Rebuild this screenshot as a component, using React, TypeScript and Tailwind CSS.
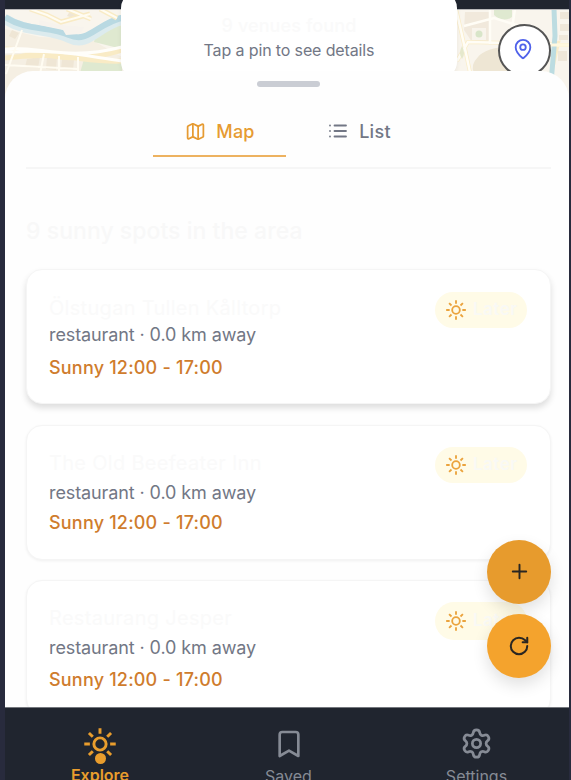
import React from "react";
import { Bookmark, Map as MapIcon, MapPin, Plus, RotateCw, Settings } from "lucide-react";

function SunIcon({ size, stroke = 2 }: { size: number; stroke?: number }) {
  return (
    <svg width={size} height={size} viewBox="0 0 24 24" fill="none" stroke="currentColor" strokeWidth={stroke} className="shrink-0">
      <circle cx="12" cy="12" r="4.6" />
      <path d="M12 0.2v4.2M12 19.6v4.2M0.2 12h4.2M19.6 12h4.2M3.7 3.7l2.9 2.9M17.4 17.4l2.9 2.9M3.7 20.3l2.9-2.9M17.4 6.6l2.9-2.9" />
    </svg>
  );
}

function ListIcon() {
  return (
    <svg width="18" height="16" viewBox="0 0 18 16" fill="none" stroke="currentColor" strokeWidth="1.8" strokeLinecap="round" className="shrink-0">
      <path d="M5.5 2.5H17M5.5 8H17M5.5 13.5H17M1 2.5h.01M1 8h.01M1 13.5h.01" />
    </svg>
  );
}

function StreetMap() {
  return (
    <svg viewBox="5 10 564 90" preserveAspectRatio="none" className="block h-[90px] w-full">
      <rect x="5" y="10" width="564" height="90" fill="#f9f5ed" />
      <path d="M5 30L40 38L90 40L122 58V100H5z" fill="#f5efe3" />
      <path d="M96 32L122 26V50L94 43z" fill="#dfe9d0" />
      <path d="M84 60L122 63V74H80z" fill="#dfe9d0" />
      <g fill="#efe6d5">
        <path d="M27 60L40 58L38 69L25 68zM47 57L57 58L56 71L46 70zM62 60L74 61L73 71L61 70zM70 12L78 14L75 20L67 17zM12 31L19 34L15 40L9 37z" />
      </g>
      <path d="M5 20C26 34 49 29 69 39S96 27 125 20" fill="none" stroke="#dcebee" strokeWidth="10" />
      <path d="M5 18C26 32 49 27 69 36S96 24 125 18" fill="none" stroke="#b9d9e2" strokeWidth="6" />
      <path d="M39 21L60 26L84 28L80 35L66 36L63 31L39 26z" fill="#f7f3ed" />
      <g fill="none" stroke="#f9ebc5" strokeWidth="5">
        <path d="M5 50C38 50 64 69 122 51M5 59C60 51 84 64 122 62M30 10L47 16L61 23L90 15M67 10L91 20M100 10L117 19" />
      </g>
      <g fill="none" stroke="#fffefa" strokeWidth="3">
        <path d="M5 50C38 46 64 63 122 48M5 53C60 50 84 57 122 62" />
      </g>
      <g fill="none" stroke="#fffcf2" strokeWidth="2">
        <path d="M30 10L47 16L61 23L90 15M67 10L91 20M100 10L117 19M44 55L39 80M78 58V80M22 31L6 75M5 66L78 70M59 57V80" />
      </g>
      <path d="M494 10H512V18Q503 24 494 16z" fill="#dfe9d0" />
      <path d="M465 13H490V43H472L464 31z" fill="#f1e9dc" />
      <rect x="472" y="29" width="14" height="12" fill="#f8f4ec" />
      <circle cx="479" cy="35" r="3.5" fill="#d8e5c9" />
      <path d="M478 58Q485 49 510 47V74H474Q470 66 478 58z" fill="#eee6d4" />
      <g fill="none" stroke="#faedca" strokeWidth="4">
        <path d="M456 10L464 45L471 78M457 62L468 43L552 45M551 46L558 44L551 75M552 46H569" />
      </g>
      <g fill="none" stroke="#fffdf6" strokeWidth="2.5">
        <path d="M456 10L464 45L471 78M457 62L468 43L552 45M552 46H569M490 10V45M464 27L494 19L532 31M515 10L510 42" />
      </g>
      <path d="M462 47Q466 54 462 60Q458 54 462 47z" fill="#e5e8cc" />
      <path d="M554 10L555 37L551 84" fill="none" stroke="#bcdce1" strokeWidth="5" />
      <path d="M551 46H569" stroke="#fff8df" strokeWidth="3" />
      <g fill="#efe7d9">
        <path d="M560 13H569V20H560zM560 25H569V32H560zM559 36H568V41H559zM558 52H567V62H558z" />
      </g>
      <rect x="5" y="10" width="564" height="1" fill="#b8b9ba" />
    </svg>
  );
}

interface Venue {
  name: string;
  card: string;
  title: string;
  hours: string;
  badge: string;
}

const venues: Venue[] = [
  {
    name: "Ölstugan Tullen Kålltorp",
    card: "mt-[23px] h-[135px] pt-[22px] shadow-[0_4px_6px_rgba(0,0,0,0.13)]",
    title: "h-[30px] leading-[33px]",
    hours: "mt-[7px]",
    badge: "h-9",
  },
  {
    name: "The Old Beefeater Inn",
    card: "mt-[21px] h-[135px] pt-[21px] shadow-[0_1px_3px_rgba(0,0,0,0.06)]",
    title: "h-[33px] leading-[33px]",
    hours: "mt-[4px]",
    badge: "h-9",
  },
  {
    name: "Restaurang Jesper",
    card: "mt-5 h-[135px] pt-[21px] shadow-[0_1px_3px_rgba(0,0,0,0.06)]",
    title: "h-[33px] leading-[33px]",
    hours: "mt-[6px]",
    badge: "h-[38px]",
  },
];

function VenueCard({ venue }: { venue: Venue }) {
  return (
    <article className={`flex shrink-0 justify-between rounded-[16px] border-[1.5px] border-[#f5f5f5] bg-white pr-[23px] pl-[22px] ${venue.card}`}>
      <div>
        <h3 className={`text-[20px] tracking-[0.3px] text-[#fafafa] ${venue.title}`}>{venue.name}</h3>
        <p className="h-[26px] text-[18px] leading-[26px] tracking-[-0.1px] text-[#727785]">restaurant · 0.0 km away</p>
        <p className={`h-[26px] text-[18px] leading-[26px] font-medium tracking-[0.2px] text-[#cf7c2d] ${venue.hours}`}>Sunny 12:00 - 17:00</p>
      </div>
      <div className={`flex w-[92px] items-center gap-[7px] rounded-full bg-[#fffbe7] pl-[11px] text-[#eba33d] ${venue.badge}`}>
        <SunIcon size={20} stroke={2.2} />
        <span className="text-[17px] font-semibold tracking-[0.5px] text-[#f9f9f5]">Later</span>
      </div>
    </article>
  );
}

export default function App() {
  return (
    <div className="relative h-[780px] w-[571px] overflow-hidden bg-[#282b3d] pr-[2px] pl-[5px] font-['Inter','Liberation_Sans',sans-serif]">
      <div className="flex h-full flex-col bg-[#20252f]">
        <header className="relative h-[71px] shrink-0 pt-[9px]">
          <StreetMap />
          <div className="absolute -top-2 left-[116px] h-[86px] w-[336px] rounded-[16px] bg-white pt-[20px] text-center shadow-[0_2px_5px_rgba(0,0,0,0.06)]">
            <p className="text-[18px] leading-[27px] font-medium tracking-[0.1px] text-[#fafafa]">9 venues found</p>
            <p className="text-[16px] leading-[22px] tracking-[-0.13px] text-[#727785]">Tap a pin to see details</p>
          </div>
          <button className="absolute top-6 left-[493px] flex size-[53px] items-center justify-center rounded-full border-2 border-[#555] bg-white pr-[3px] pb-[3px] text-[#4f61ea]">
            <MapPin size={22} strokeWidth={2} />
          </button>
        </header>

        <main className="relative flex h-[636px] shrink-0 flex-col overflow-hidden rounded-t-[28px] bg-[#fefefe] pr-[18px] pl-[21px]">
          <div className="mt-[10px] h-[6px] w-[63px] shrink-0 self-center rounded-full bg-[#cacdd4]" />
          <nav className="flex h-[82px] shrink-0 justify-center border-b-2 border-[#f6f6f6] pt-[18px] pl-[7px] text-[18px] font-medium">
            <div className="flex h-[52px] w-[133px] items-center justify-center gap-[10px] border-b-2 border-[#edb260] pt-[2px] pl-[2px] text-[#e69b32]">
              <MapIcon size={21} strokeWidth={2} />
              <span className="tracking-[0.2px]">Map</span>
            </div>
            <div className="flex h-[50px] w-[146px] items-center justify-center gap-[12px] pt-[2px] pl-[3px] text-[#727785]">
              <ListIcon />
              <span className="tracking-[0.3px]">List</span>
            </div>
          </nav>
          <h2 className="mt-[48px] h-[29px] shrink-0 text-[23px] leading-[28px] font-medium tracking-[0.04px] text-[#f8f8f8]">9 sunny spots in the area</h2>
          {venues.map((venue) => (
            <VenueCard key={venue.name} venue={venue} />
          ))}
        </main>

        <footer className="relative flex flex-1 overflow-hidden border-t border-[#74777d] bg-[#20252f] text-[#868b95]">
          <div className="flex w-[190px] shrink-0 flex-col items-center pt-5 text-[#e99d2d]">
            <SunIcon size={32} stroke={2.2} />
            <div className="-mt-[7px] size-[11px] shrink-0 rounded-full bg-[#e99d2d]" />
            <span className="mt-px text-[16px] leading-[20px] font-semibold">Explore</span>
          </div>
          <div className="flex w-[187px] shrink-0 flex-col items-center pt-[20px]">
            <Bookmark size={32} strokeWidth={2} className="shrink-0" />
            <span className="mt-[6px] text-[16px] leading-[20px]">Saved</span>
          </div>
          <div className="flex w-[189px] shrink-0 flex-col items-center pt-[19px]">
            <Settings size={33} strokeWidth={2} className="shrink-0" />
            <span className="mt-[6px] text-[16px] leading-[20px]">Settings</span>
          </div>
        </footer>
      </div>

      <div className="absolute top-[540px] right-[20px] flex flex-col gap-[10px] text-[#292622]">
        <button className="flex size-16 items-center justify-center rounded-full bg-[#e79b2d] pb-[2px] shadow-[0_7px_16px_rgba(0,0,0,0.12)]">
          <Plus size={23} strokeWidth={2} />
        </button>
        <button className="flex size-16 items-center justify-center rounded-full bg-[#f4a32d] shadow-[0_7px_16px_rgba(0,0,0,0.12)]">
          <RotateCw size={22} strokeWidth={2.2} />
        </button>
      </div>
    </div>
  );
}
